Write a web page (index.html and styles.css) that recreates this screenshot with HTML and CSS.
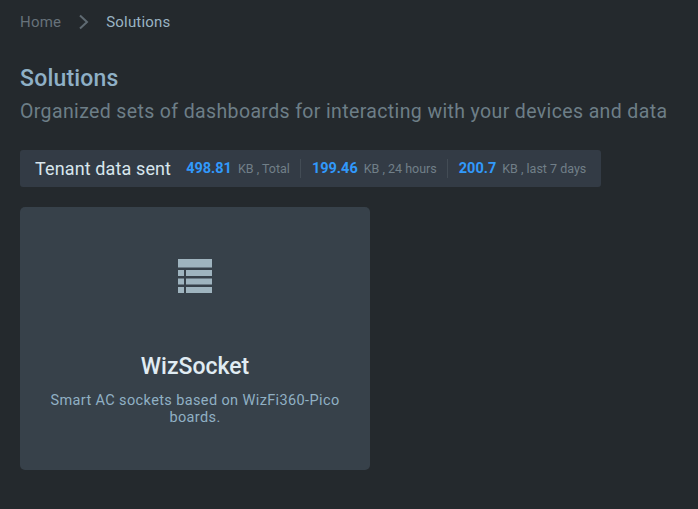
FILE: index.html
```html
<!DOCTYPE html>
<html lang="en">
<head>
<meta charset="utf-8">
<title>Solutions</title>
<link rel="stylesheet" href="styles.css">
</head>
<body>
<nav class="crumbs">
  <span class="crumb-home">Home</span>
  <svg class="crumb-sep" width="12" height="16" viewBox="0 0 12 16"><path d="M2 1.5 L9 8 L2 14.5" fill="none" stroke="#5f6a72" stroke-width="2"/></svg>
  <span class="crumb-current">Solutions</span>
</nav>
<h1 class="title">Solutions</h1>
<p class="subtitle">Organized sets of dashboards for interacting with your devices and data</p>
<div class="stats">
  <span class="stats-label">Tenant data sent</span>
  <span class="stat"><b class="num">498.81</b><span class="unit">KB , Total</span></span>
  <span class="stat"><b class="num">199.46</b><span class="unit">KB , 24 hours</span></span>
  <span class="stat"><b class="num">200.7</b><span class="unit">KB , last 7 days</span></span>
</div>
<section class="card">
  <svg class="card-icon" width="34" height="34" viewBox="0 0 34 34" fill="#9fb4bf">
    <rect x="0" y="0" width="34" height="8.500"/>
    <rect x="0" y="11" width="6" height="6"/><rect x="8" y="11" width="26" height="6"/>
    <rect x="0" y="19.500" width="6" height="6"/><rect x="8" y="19.500" width="26" height="6"/>
    <rect x="0" y="28" width="6" height="6"/><rect x="8" y="28" width="26" height="6"/>
  </svg>
  <h2 class="card-title">WizSocket</h2>
  <p class="card-text">Smart AC sockets based on WizFi360-Pico boards.</p>
</section>
</body>
</html>
```
FILE: styles.css
```css
html, body { height: 100%; }
body {
  margin: 0;
  padding: 0 20px;
  background: #24292d;
  font-family: Roboto, sans-serif;
  overflow: hidden;
}
.crumbs {
  display: flex;
  align-items: center;
  height: 20px;
  padding-top: 12px;
  font-size: 15px;
  letter-spacing: 0.2px;
}
.crumb-home { color: #67727a; }
.crumb-sep { margin: 0 16px 0 17px; }
.crumb-current { color: #9ab4c3; }
.title {
  margin: 34px 0 0;
  font-size: 23px;
  font-weight: 500;
  line-height: 26px;
  letter-spacing: 0.2px;
  color: #8fb0c6;
}
.subtitle {
  margin: 7px 0 0;
  font-size: 19.500px;
  line-height: 26px;
  letter-spacing: 0.37px;
  color: #6d7e87;
  white-space: nowrap;
}
.stats {
  display: flex;
  align-items: center;
  width: 581px;
  height: 37px;
  margin-top: 25px;
  padding-left: 15px;
  box-sizing: border-box;
  background: #333b45;
  border-radius: 3px;
}
.stats-label {
  font-size: 18px;
  letter-spacing: 0.12px;
  color: #d8e6ed;
  margin-right: 15px;
  white-space: nowrap;
}
.stat {
  display: flex;
  align-items: baseline;
  padding-right: 10px;
  margin-right: 11px;
  border-right: 1px solid #434c55;
  height: 19px;
  line-height: 19px;
}
.stat:last-child { border-right: 0; padding-right: 0; margin-right: 0; }
.num {
  font-size: 14.500px;
  font-weight: 700;
  color: #3199fb;
}
.unit {
  margin-left: 6px;
  font-size: 12.500px;
  color: #717f88;
  white-space: nowrap;
}
.card {
  display: flex;
  flex-direction: column;
  align-items: center;
  width: 350px;
  height: 263px;
  margin-top: 20px;
  box-sizing: border-box;
  padding: 52px 30px 0;
  background: #37414a;
  border-radius: 5px;
  text-align: center;
}
.card-icon { display: block; }
.card-title {
  margin: 59px 0 0;
  font-size: 23px;
  font-weight: 500;
  line-height: 30px;
  color: #e0ecf3;
}
.card-text {
  margin: 10px 0 0;
  font-size: 14.500px;
  line-height: 17px;
  letter-spacing: 0.38px;
  color: #90b0c4;
}
```
